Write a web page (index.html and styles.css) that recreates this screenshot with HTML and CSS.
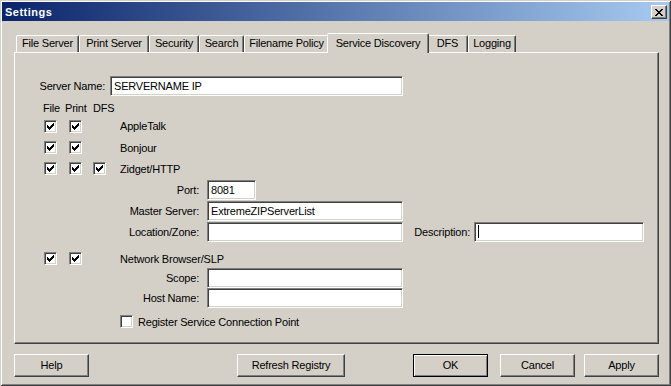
FILE: index.html
```html
<!DOCTYPE html>
<html>
<head>
<meta charset="utf-8">
<title>Settings</title>
<link rel="stylesheet" href="styles.css">
</head>
<body>
<div class="window">
  <div class="titlebar">
    <span class="title">Settings</span>
    <div class="closebtn"><svg width="8" height="7" viewBox="0 0 8 7"><path d="M0 0h2v1H0zM6 0h2v1H6zM1 1h2v1H1zM5 1h2v1H5zM2 2h4v1H2zM3 3h2v1H3zM2 4h4v1H2zM1 5h2v1H1zM5 5h2v1H5zM0 6h2v1H0zM6 6h2v1H6z" fill="#000"/></svg></div>
  </div>
  <div class="client">
    <div class="tabs">
      <div class="tab t1">File Server</div>
      <div class="tab t2">Print Server</div>
      <div class="tab t3">Security</div>
      <div class="tab t4">Search</div>
      <div class="tab t5">Filename Policy</div>
      <div class="tab t6 active">Service Discovery</div>
      <div class="tab t7">DFS</div>
      <div class="tab t8">Logging</div>
    </div>
    <div class="panel">
      <div class="server-row">
        <span class="lbl-server">Server Name:</span>
        <div class="field w-server">SERVERNAME IP</div>
      </div>
      <div class="head-row">
        <span class="h-file">File</span><span class="h-print">Print</span><span>DFS</span>
      </div>
      <div class="check-row first">
        <span class="cell c1"><span class="cb"><svg width="7" height="7" viewBox="0 0 7 7"><path d="M6 0h1v1H6zM5 1h2v1H5zM0 2h1v1H0zM4 2h3v1H4zM0 3h2v1H0zM3 3h3v1H3zM0 4h5v1H0zM1 5h3v1H1zM2 6h1v1H2z"/></svg></span></span>
        <span class="cell c2"><span class="cb"><svg width="7" height="7" viewBox="0 0 7 7"><path d="M6 0h1v1H6zM5 1h2v1H5zM0 2h1v1H0zM4 2h3v1H4zM0 3h2v1H0zM3 3h3v1H3zM0 4h5v1H0zM1 5h3v1H1zM2 6h1v1H2z"/></svg></span></span>
        <span class="cell c3"></span>
        <span class="svc">AppleTalk</span>
      </div>
      <div class="check-row">
        <span class="cell c1"><span class="cb"><svg width="7" height="7" viewBox="0 0 7 7"><path d="M6 0h1v1H6zM5 1h2v1H5zM0 2h1v1H0zM4 2h3v1H4zM0 3h2v1H0zM3 3h3v1H3zM0 4h5v1H0zM1 5h3v1H1zM2 6h1v1H2z"/></svg></span></span>
        <span class="cell c2"><span class="cb"><svg width="7" height="7" viewBox="0 0 7 7"><path d="M6 0h1v1H6zM5 1h2v1H5zM0 2h1v1H0zM4 2h3v1H4zM0 3h2v1H0zM3 3h3v1H3zM0 4h5v1H0zM1 5h3v1H1zM2 6h1v1H2z"/></svg></span></span>
        <span class="cell c3"></span>
        <span class="svc">Bonjour</span>
      </div>
      <div class="check-row">
        <span class="cell c1"><span class="cb"><svg width="7" height="7" viewBox="0 0 7 7"><path d="M6 0h1v1H6zM5 1h2v1H5zM0 2h1v1H0zM4 2h3v1H4zM0 3h2v1H0zM3 3h3v1H3zM0 4h5v1H0zM1 5h3v1H1zM2 6h1v1H2z"/></svg></span></span>
        <span class="cell c2"><span class="cb"><svg width="7" height="7" viewBox="0 0 7 7"><path d="M6 0h1v1H6zM5 1h2v1H5zM0 2h1v1H0zM4 2h3v1H4zM0 3h2v1H0zM3 3h3v1H3zM0 4h5v1H0zM1 5h3v1H1zM2 6h1v1H2z"/></svg></span></span>
        <span class="cell c3"><span class="cb"><svg width="7" height="7" viewBox="0 0 7 7"><path d="M6 0h1v1H6zM5 1h2v1H5zM0 2h1v1H0zM4 2h3v1H4zM0 3h2v1H0zM3 3h3v1H3zM0 4h5v1H0zM1 5h3v1H1zM2 6h1v1H2z"/></svg></span></span>
        <span class="svc">Zidget/HTTP</span>
      </div>
      <div class="sub-row">
        <span class="sub-lbl">Port:</span>
        <div class="field w-port">8081</div>
      </div>
      <div class="sub-row">
        <span class="sub-lbl">Master Server:</span>
        <div class="field w-sub">ExtremeZIPServerList</div>
      </div>
      <div class="loc-row">
        <span class="sub-lbl">Location/Zone:</span>
        <div class="field"></div>
        <span class="desc-lbl">Description:</span>
        <div class="field"><span class="caret"></span></div>
      </div>
      <div class="check-row net">
        <span class="cell c1"><span class="cb"><svg width="7" height="7" viewBox="0 0 7 7"><path d="M6 0h1v1H6zM5 1h2v1H5zM0 2h1v1H0zM4 2h3v1H4zM0 3h2v1H0zM3 3h3v1H3zM0 4h5v1H0zM1 5h3v1H1zM2 6h1v1H2z"/></svg></span></span>
        <span class="cell c2"><span class="cb"><svg width="7" height="7" viewBox="0 0 7 7"><path d="M6 0h1v1H6zM5 1h2v1H5zM0 2h1v1H0zM4 2h3v1H4zM0 3h2v1H0zM3 3h3v1H3zM0 4h5v1H0zM1 5h3v1H1zM2 6h1v1H2z"/></svg></span></span>
        <span class="cell c3"></span>
        <span class="svc">Network Browser/SLP</span>
      </div>
      <div class="sub-row tight">
        <span class="sub-lbl">Scope:</span>
        <div class="field w-sub"></div>
      </div>
      <div class="sub-row tight">
        <span class="sub-lbl">Host Name:</span>
        <div class="field w-sub"></div>
      </div>
      <div class="reg-row">
        <span class="cb"></span>
        <span class="reg-lbl">Register Service Connection Point</span>
      </div>
    </div>
    <div class="buttons">
      <div class="btn b-help">Help</div>
      <div class="btn b-refresh">Refresh Registry</div>
      <div class="btn b-ok default">OK</div>
      <div class="btn b-cancel">Cancel</div>
      <div class="btn b-apply">Apply</div>
    </div>
  </div>
</div>
</body>
</html>
```

FILE: styles.css
```css
* { box-sizing: border-box; }
html, body { margin: 0; padding: 0; background: #d4d0c8; }
body {
  font-family: "Liberation Sans", Arial, sans-serif;
  font-size: 11px;
  letter-spacing: -0.2px;
  color: #000;
}
.window {
  width: 671px;
  height: 386px;
  padding: 2px;
  background: #d4d0c8;
  box-shadow: inset 1px 1px 0 #d4d0c8, inset -1px -1px 0 #404040, inset 2px 2px 0 #fff, inset -2px -2px 0 #808080;
  display: flex;
  flex-direction: column;
}
.titlebar {
  height: 19px;
  flex: none;
  background: linear-gradient(to right, #0a246a, #a6caf0);
  display: flex;
  align-items: center;
  justify-content: space-between;
  padding: 0 2px 0 3px;
}
.title {
  color: #fff;
  font-weight: bold;
  letter-spacing: 0.5px;
}
.closebtn {
  width: 16px;
  height: 14px;
  flex: none;
  background: #d4d0c8;
  border: 1px solid;
  border-color: #fff #404040 #404040 #fff;
  box-shadow: inset -1px -1px 0 #808080;
  display: flex;
  align-items: center;
  justify-content: center;
}
.closebtn svg { display: block; margin-top: 1px; }
.client {
  padding: 12px 10px 0 12px;
  display: flex;
  flex-direction: column;
}
.tabs {
  display: flex;
  align-items: flex-end;
  height: 19px;
  padding-left: 2px;
}
.tab {
  flex: none;
  height: 17px;
  border: 1px solid;
  border-bottom: 0;
  border-color: #fff #404040 transparent #fff;
  border-radius: 2px 2px 0 0;
  box-shadow: inset -1px 0 0 #808080;
  line-height: 15px;
  text-align: center;
  white-space: nowrap;
  background: #d4d0c8;
}
.tab.active {
  height: 20px;
  margin: 0 -2px -1px;
  line-height: 18px;
  position: relative;
  z-index: 1;
}
.t1 { width: 63px; }
.t2 { width: 70px; }
.t3 { width: 50px; }
.t4 { width: 45px; }
.t5 { width: 85px; }
.t6 { width: 102px; }
.t7 { width: 41px; }
.t8 { width: 48px; }
.panel {
  width: 645px;
  height: 292px;
  flex: none;
  border: 1px solid;
  border-color: #fff #404040 #404040 #fff;
  box-shadow: inset -1px -1px 0 #808080;
  padding-top: 23px;
  display: flex;
  flex-direction: column;
}
.field {
  flex: none;
  height: 20px;
  background: #fff;
  border: 1px solid;
  border-color: #808080 #fff #fff #808080;
  box-shadow: inset 1px 1px 0 #404040, inset -1px -1px 0 #d4d0c8;
  padding-left: 3px;
  line-height: 18px;
  white-space: nowrap;
  display: flex;
  align-items: center;
}
.server-row {
  display: flex;
  align-items: center;
  height: 20px;
}
.lbl-server {
  flex: none;
  width: 95px;
  text-align: right;
  padding-right: 5px;
}
.w-server { width: 293px; }
.w-sub { width: 196px; }
.w-port { width: 49px; }
.caret {
  width: 1px;
  height: 13px;
  background: #000;
}
.head-row {
  margin-top: 6px;
  height: 13px;
  line-height: 13px;
  padding-left: 28px;
  display: flex;
}
.h-file { width: 22px; }
.h-print { width: 28px; }
.check-row {
  display: flex;
  align-items: center;
  height: 21px;
  padding-left: 29px;
}
.check-row.first { height: 22px; }
.check-row.net { margin-top: 7px; height: 19px; }
.cell { flex: none; display: flex; align-items: center; }
.c1 { width: 25px; }
.c2 { width: 24px; }
.c3 { width: 27px; }
.cb {
  width: 13px;
  height: 13px;
  flex: none;
  background: #fff;
  border: 1px solid;
  border-color: #808080 #fff #fff #808080;
  box-shadow: inset 1px 1px 0 #404040, inset -1px -1px 0 #d4d0c8;
  display: flex;
  align-items: center;
  justify-content: center;
}
.cb svg { display: block; }
.sub-row {
  display: flex;
  align-items: center;
  height: 21px;
}
.sub-row.tight { height: 20px; }
.sub-lbl {
  flex: none;
  width: 192px;
  text-align: right;
  padding-right: 8px;
}
.loc-row {
  display: grid;
  grid-template-columns: 192px 196px 71px 170px;
  align-items: center;
  height: 21px;
}
.desc-lbl {
  text-align: right;
  padding-right: 4px;
  white-space: nowrap;
}
.reg-row {
  display: flex;
  align-items: center;
  height: 21px;
  margin-top: 3px;
  padding-left: 105px;
}
.reg-lbl { margin-left: 5px; }
.buttons {
  display: flex;
  margin-top: 10px;
}
.btn {
  flex: none;
  width: 75px;
  height: 23px;
  background: #d4d0c8;
  border: 1px solid;
  border-color: #fff #404040 #404040 #fff;
  box-shadow: inset -1px -1px 0 #808080;
  text-align: center;
  line-height: 21px;
  white-space: nowrap;
}
.btn.default {
  border-color: #000;
  box-shadow: inset 1px 1px 0 #fff, inset -1px -1px 0 #808080;
}
.b-refresh { width: 108px; margin-left: 148px; }
.b-ok { margin-left: 68px; }
.b-cancel { margin-left: 12px; }
.b-apply { margin-left: 9px; }
```
